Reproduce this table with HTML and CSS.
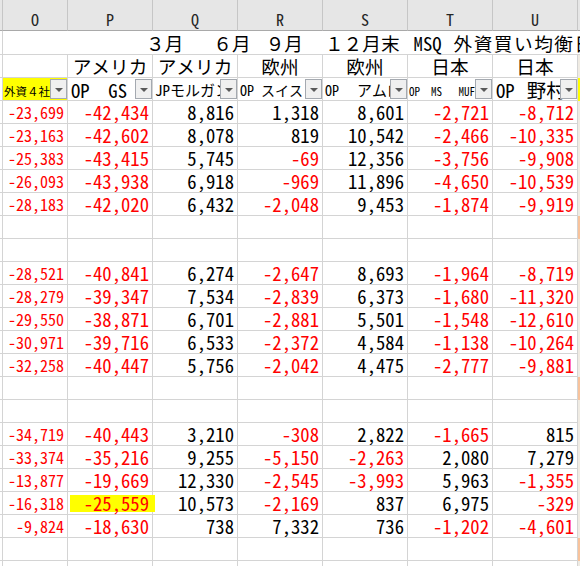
FILE: index.html
```html
<!DOCTYPE html>
<html lang="ja">
<head>
<meta charset="utf-8">
<title>外資買い均衡</title>
<link rel="stylesheet" href="styles.css">
</head>
<body>
<div class="sheet">
  <div class="h hn"></div><div class="h">O</div><div class="h">P</div><div class="h">Q</div><div class="h">R</div><div class="h">S</div><div class="h">T</div><div class="h">U</div><div class="h hv"></div>

  <div class="c n"></div>
  <div class="title"><span class="t1">３月</span><span class="t2">６月</span><span class="t3">９月</span><span class="t4">１２月末</span><span class="t5">MSQ</span><span class="t6">外資買い均衡日</span></div>

  <div class="c n"></div><div class="c"></div><div class="c m">アメリカ</div><div class="c m">アメリカ</div><div class="c m">欧州</div><div class="c m">欧州</div><div class="c m">日本</div><div class="c m">日本</div><div class="v"></div>

  <div class="c n"></div>
  <div class="c f fo"><span>外資４社</span><i class="dd"></i></div>
  <div class="c f fp"><span>OP　GS</span><i class="dd"></i></div>
  <div class="c f fq"><span>JPモルガン</span><i class="dd"></i></div>
  <div class="c f fr"><span>OP スイス</span><i class="dd"></i></div>
  <div class="c f fs"><span class="op">OP</span><span class="am">アムロ</span><i class="dd"></i></div>
  <div class="c f ft"><span>OP  MS   MUFG</span><i class="dd"></i></div>
  <div class="c f fu"><span>OP</span><span class="nm">野村</span><i class="dd"></i></div>
  <div class="v yv"></div>

  <div class="c n"></div><div class="c o r">-23,699</div><div class="c r">-42,434</div><div class="c">8,816</div><div class="c">1,318</div><div class="c">8,601</div><div class="c r">-2,721</div><div class="c r">-8,712</div><div class="v"></div>
  <div class="c n"></div><div class="c o r">-23,163</div><div class="c r">-42,602</div><div class="c">8,078</div><div class="c">819</div><div class="c">10,542</div><div class="c r">-2,466</div><div class="c r">-10,335</div><div class="v"></div>
  <div class="c n"></div><div class="c o r">-25,383</div><div class="c r">-43,415</div><div class="c">5,745</div><div class="c r">-69</div><div class="c">12,356</div><div class="c r">-3,756</div><div class="c r">-9,908</div><div class="v"></div>
  <div class="c n"></div><div class="c o r">-26,093</div><div class="c r">-43,938</div><div class="c">6,918</div><div class="c r">-969</div><div class="c">11,896</div><div class="c r">-4,650</div><div class="c r">-10,539</div><div class="v"></div>
  <div class="c n"></div><div class="c o r">-28,183</div><div class="c r">-42,020</div><div class="c">6,432</div><div class="c r">-2,048</div><div class="c">9,453</div><div class="c r">-1,874</div><div class="c r">-9,919</div><div class="v"></div>

  <div class="c n"></div><div class="c"></div><div class="c"></div><div class="c"></div><div class="c"></div><div class="c"></div><div class="c"></div><div class="c"></div><div class="v sep"></div>
  <div class="c n"></div><div class="c"></div><div class="c"></div><div class="c"></div><div class="c"></div><div class="c"></div><div class="c"></div><div class="c"></div><div class="v"></div>

  <div class="c n"></div><div class="c o r">-28,521</div><div class="c r">-40,841</div><div class="c">6,274</div><div class="c r">-2,647</div><div class="c">8,693</div><div class="c r">-1,964</div><div class="c r">-8,719</div><div class="v"></div>
  <div class="c n"></div><div class="c o r">-28,279</div><div class="c r">-39,347</div><div class="c">7,534</div><div class="c r">-2,839</div><div class="c">6,373</div><div class="c r">-1,680</div><div class="c r">-11,320</div><div class="v"></div>
  <div class="c n"></div><div class="c o r">-29,550</div><div class="c r">-38,871</div><div class="c">6,701</div><div class="c r">-2,881</div><div class="c">5,501</div><div class="c r">-1,548</div><div class="c r">-12,610</div><div class="v"></div>
  <div class="c n"></div><div class="c o r">-30,971</div><div class="c r">-39,716</div><div class="c">6,533</div><div class="c r">-2,372</div><div class="c">4,584</div><div class="c r">-1,138</div><div class="c r">-10,264</div><div class="v"></div>
  <div class="c n"></div><div class="c o r">-32,258</div><div class="c r">-40,447</div><div class="c">5,756</div><div class="c r">-2,042</div><div class="c">4,475</div><div class="c r">-2,777</div><div class="c r">-9,881</div><div class="v"></div>

  <div class="c n"></div><div class="c"></div><div class="c"></div><div class="c"></div><div class="c"></div><div class="c"></div><div class="c"></div><div class="c"></div><div class="v sep"></div>
  <div class="c n"></div><div class="c"></div><div class="c"></div><div class="c"></div><div class="c"></div><div class="c"></div><div class="c"></div><div class="c"></div><div class="v"></div>

  <div class="c n"></div><div class="c o r">-34,719</div><div class="c r">-40,443</div><div class="c">3,210</div><div class="c r">-308</div><div class="c">2,822</div><div class="c r">-1,665</div><div class="c">815</div><div class="v"></div>
  <div class="c n"></div><div class="c o r">-33,374</div><div class="c r">-35,216</div><div class="c">9,255</div><div class="c r">-5,150</div><div class="c r">-2,263</div><div class="c">2,080</div><div class="c">7,279</div><div class="v"></div>
  <div class="c n"></div><div class="c o r">-13,877</div><div class="c r">-19,669</div><div class="c">12,330</div><div class="c r">-2,545</div><div class="c r">-3,993</div><div class="c">5,963</div><div class="c r">-1,355</div><div class="v"></div>
  <div class="c n"></div><div class="c o r">-16,318</div><div class="c r hl">-25,559</div><div class="c">10,573</div><div class="c r">-2,169</div><div class="c">837</div><div class="c">6,975</div><div class="c r">-329</div><div class="v"></div>
  <div class="c n"></div><div class="c o r">-9,824</div><div class="c r">-18,630</div><div class="c">738</div><div class="c">7,332</div><div class="c">736</div><div class="c r">-1,202</div><div class="c r">-4,601</div><div class="v"></div>

  <div class="c n"></div><div class="c"></div><div class="c"></div><div class="c"></div><div class="c"></div><div class="c"></div><div class="c"></div><div class="c"></div><div class="v sep"></div>
  <div class="c n"></div><div class="c"></div><div class="c"></div><div class="c"></div><div class="c"></div><div class="c"></div><div class="c"></div><div class="c"></div><div class="v"></div>
</div>
</body>
</html>
```
FILE: styles.css
```css
* { box-sizing: border-box; margin: 0; padding: 0; }
html, body { width: 580px; height: 566px; overflow: hidden; background: #ffffff; }
body {
  font-family: "Noto Sans Mono CJK JP", "Noto Sans CJK JP", monospace;
  color: #000000;
}
.sheet {
  display: grid;
  grid-template-columns: 3px 65px repeat(6, 85px) 3px;
  grid-template-rows: 31px 24px 23px 23px repeat(21, 23px);
  width: 581px;
}
.h {
  background: #e6e6e6;
  border-right: 1px solid #c6c6c6;
  border-bottom: 1px solid #a9a9a9;
  display: flex;
  align-items: flex-end;
  justify-content: center;
  font-size: 16px;
  line-height: 16px;
  padding-bottom: 3px;
  color: #262626;
  font-weight: 300;
}
.hv { border-right: none; }
.c {
  border-right: 1px solid #d4d4d4;
  border-bottom: 1px solid #d4d4d4;
  font-size: 18.67px;
  line-height: 22px;
  text-align: right;
  padding-right: 3px;
  white-space: nowrap;
  overflow: hidden;
  position: relative;
  font-feature-settings: "hwid";
  font-weight: 300;
}
.n { padding: 0; }
.o { font-size: 16px; }
.r { color: #ff0000; }
.m { text-align: center; padding: 0; font-feature-settings: normal; }
.v { background: #efebe3; }
.sep { background: #f8c39c; }
.yv { background: #ffff00; }
.title {
  grid-column: 2 / -1;
  border-bottom: 1px solid #d4d4d4;
  display: flex;
  font-size: 18.67px;
  line-height: 23px;
  white-space: nowrap;
  padding-left: 143px;
  font-weight: 300;
}
.t2 { margin-left: 30px; }
.t3 { margin-left: 15px; }
.t4 { margin-left: 22px; }
.t5 { margin-left: 14px; }
.t6 { margin-left: 12px; letter-spacing: 1.5px; }

.f {
  text-align: left;
  padding: 0 0 0 2px;
  white-space: pre;
  display: flex;
  align-items: flex-end;
  font-feature-settings: normal;
}
.f span { line-height: 20px; }
.fo { background: #ffff00; font-size: 11.5px; padding-left: 1px; }
.fo span { line-height: 18px; }
.fp { padding-left: 3px; }
.fq { font-size: 15px; }
.fr { font-size: 14px; }
.fs { font-size: 14px; }
.fs .am { margin-left: 18px; font-size: 15px; }
.ft { font-size: 11px; padding-left: 1px; }
.ft span { line-height: 17px; }
.fu { padding-left: 3px; }
.fu .nm { margin-left: 12px; font-size: 19.5px; }
.dd {
  position: absolute;
  right: 0;
  top: 1px;
  width: 17px;
  height: 20px;
  background: #f0f0f0;
  border: 1px solid #a4a9b0;
}
.dd::after {
  content: "";
  position: absolute;
  left: 4px;
  top: 8px;
  border-left: 4px solid transparent;
  border-right: 4px solid transparent;
  border-top: 4px solid #595959;
}
.hl { overflow: visible; z-index: 0; }
.hl::before {
  content: "";
  position: absolute;
  left: 2px;
  top: 3px;
  width: 85px;
  height: 17px;
  background: #ffff00;
  z-index: -1;
}
```
